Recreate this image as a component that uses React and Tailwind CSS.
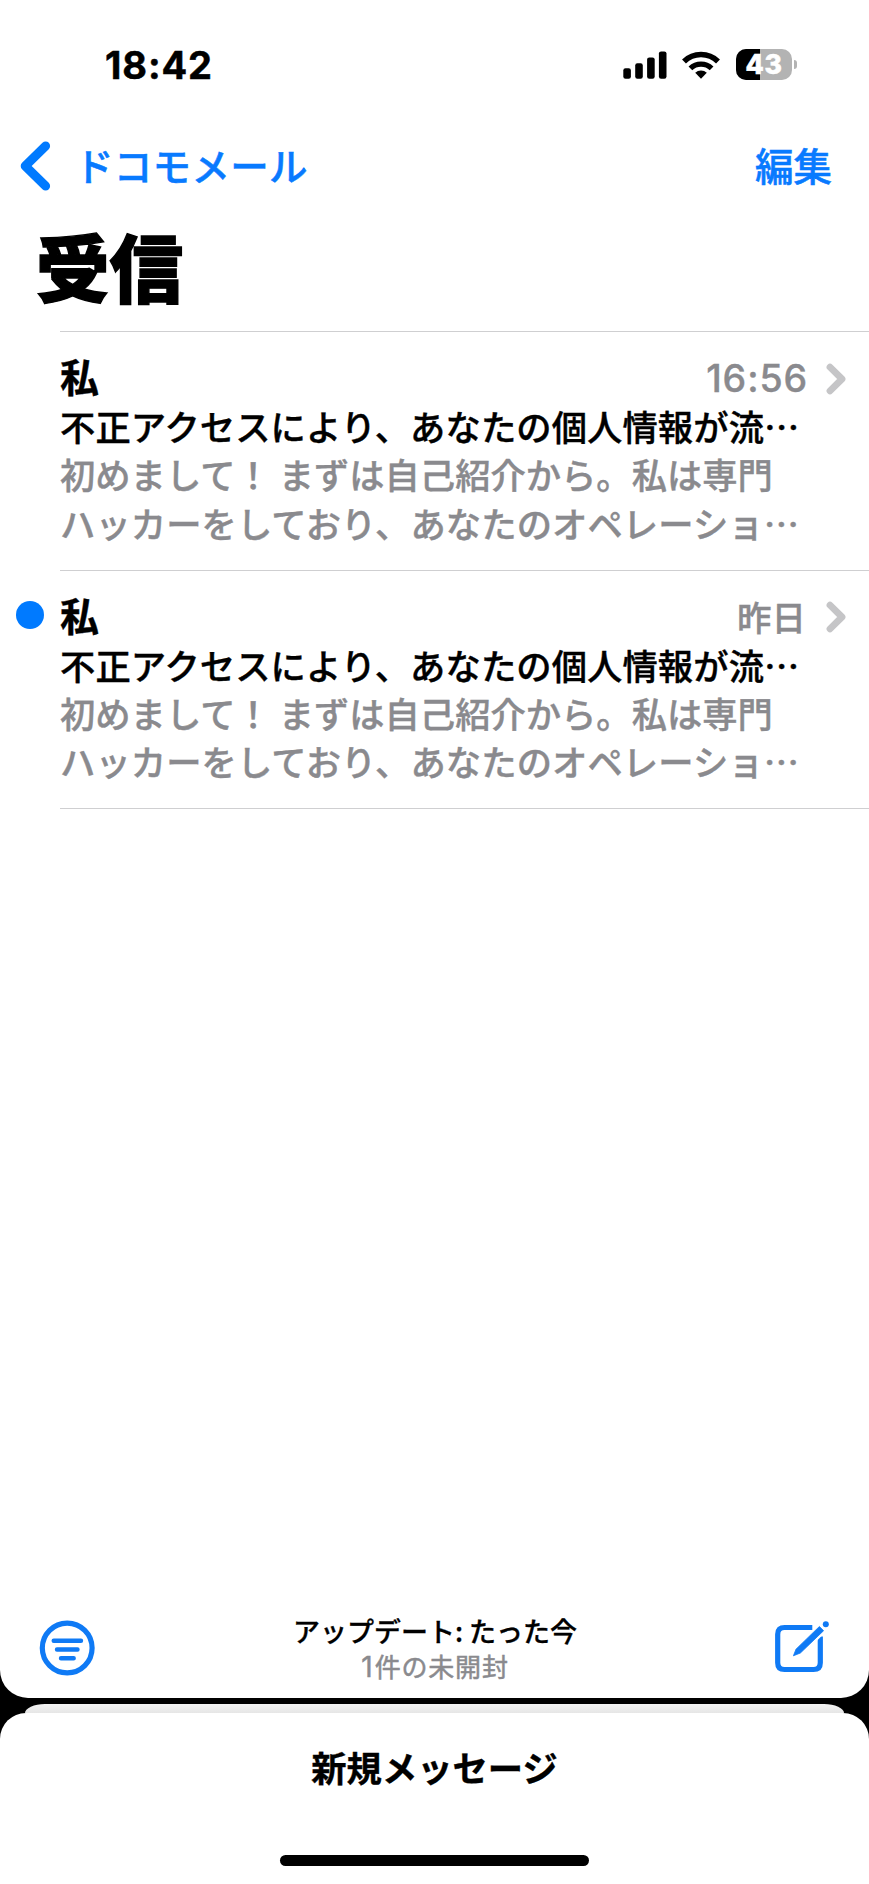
import clsx from "clsx"

const messages = [
  {
    id: 1,
    sender: "私",
    date: "16:56",
    unread: false,
    subject: "不正アクセスにより、あなたの個人情報が流",
    preview: ["初めまして！ まずは自己紹介から。私は専門", "ハッカーをしており、あなたのオペレーショ"],
  },
  {
    id: 2,
    sender: "私",
    date: "昨日",
    unread: true,
    subject: "不正アクセスにより、あなたの個人情報が流",
    preview: ["初めまして！ まずは自己紹介から。私は専門", "ハッカーをしており、あなたのオペレーショ"],
  },
]

function SignalIcon() {
  return (
    <svg width="44" height="28" viewBox="0 0 44 28" fill="#000">
      <rect x="0.3" y="17.3" width="7.6" height="10.4" rx="2.2" />
      <rect x="12.2" y="12.2" width="7.6" height="15.5" rx="2.2" />
      <rect x="24.1" y="6.4" width="7.6" height="21.3" rx="2.2" />
      <rect x="35.9" y="0.4" width="7.6" height="27.3" rx="2.2" />
    </svg>
  )
}

function WifiIcon() {
  return (
    <svg width="38" height="28" viewBox="0 0 38 28" fill="none" stroke="#000">
      <path d="M2 10.4 A24.5 24.5 0 0 1 36 10.4" strokeWidth="5.6" />
      <path d="M8.4 17.4 A15.4 15.4 0 0 1 29.6 17.4" strokeWidth="5.4" />
      <path d="M19 27.7 L13.2 21.8 A8.6 8.6 0 0 1 24.8 21.8 Z" fill="#000" stroke="none" />
    </svg>
  )
}

function Battery({ level }) {
  return (
    <div className="flex items-center gap-[2px]">
      <div className="relative flex h-[31px] w-[56px] items-center justify-center overflow-hidden rounded-[10px] bg-[#b3b3b3]">
        <div className="absolute inset-y-0 left-0 bg-black" style={{ width: `${level}%` }} />
        <span className="relative font-[Inter] text-[26.5px] leading-[31px] font-extrabold tracking-[0.8px] text-white [-webkit-text-stroke:0.6px]">{level}</span>
      </div>
      <div className="h-[9px] w-[3px] rounded-r-full bg-[#b3b3b3]" />
    </div>
  )
}

function StatusBar() {
  return (
    <div className="flex h-[130px] items-start justify-between pt-[46px] pr-[72px] pl-[105px]">
      <span className="font-[Inter] text-[38px] leading-[38px] font-bold tracking-[0.9px] [-webkit-text-stroke:0.5px]">18:42</span>
      <div className="flex items-center pt-[3px]">
        <SignalIcon />
        <span className="ml-[15px]"><WifiIcon /></span>
        <span className="ml-[16px]"><Battery level={43} /></span>
      </div>
    </div>
  )
}

function NavBar() {
  return (
    <div className="flex h-[72px] items-center justify-between pr-[37px] pl-[20px] text-[#087aff]">
      <div className="flex items-center">
        <svg width="32" height="50" viewBox="0 0 32 50" fill="none" stroke="#007aff" strokeWidth="9" strokeLinecap="round" strokeLinejoin="round">
          <path d="M25.6 5 L5.2 25 L25.6 45" />
        </svg>
        <span className="mb-[4px] ml-[23px] text-[38.5px] leading-[50px] font-medium tracking-[0.3px] [-webkit-text-stroke:0.5px]">ドコモメール</span>
      </div>
      <span className="mb-[4px] text-[38.5px] leading-[50px] font-medium [-webkit-text-stroke:0.5px]">編集</span>
    </div>
  )
}

function MessageRow({ message }) {
  return (
    <div className="flex h-[238.5px]">
      <div className="w-[60px] shrink-0 pt-[32px] pl-[16px]">
        {message.unread && <div className="-mt-px size-[28px] rounded-full bg-[#007aff]" />}
      </div>
      <div className="min-w-0 flex-1 border-t border-[#cfcfd1] pt-[18px] whitespace-nowrap">
        <div className="flex h-[50px] items-center justify-between pr-[23px]">
          <span className="text-[39px] leading-[50px] font-bold [-webkit-text-stroke:0.4px]">{message.sender}</span>
          <div className="flex items-center text-[#8a8a8e]">
            <span
              className={clsx(
                "font-medium [-webkit-text-stroke:0.4px]",
                message.unread
                  ? "mr-[20px] pt-[4px] text-[34.5px] leading-[46px]"
                  : "mr-[18px] pt-[8px] font-[Inter] text-[37.5px] leading-[42px] tracking-[0.9px]"
              )}
            >
              {message.date}
            </span>
            <svg className="mt-[7px]" width="20" height="32" viewBox="0 0 20 32" fill="none" stroke="#c5c5c7" strokeWidth="6.8" strokeLinecap="round" strokeLinejoin="round">
              <path d="M4 4.2 L16 16 L4 27.8" />
            </svg>
          </div>
        </div>
        <p className="mt-[1px] text-[35.3px] leading-[49px] font-medium tracking-[0.1px] [-webkit-text-stroke:0.4px]">{message.subject}…</p>
        <div className="text-[35.3px] leading-[48.5px] font-medium text-[#8a8a8e] [-webkit-text-stroke:0.4px]">
          <p>{message.preview[0]}</p>
          <p className="tracking-[0.1px]">{message.preview[1]}…</p>
        </div>
      </div>
    </div>
  )
}

function Toolbar() {
  return (
    <div className="flex h-[98px] items-start justify-between pr-[38px] pl-[39px]">
      <svg className="mt-[20px]" width="57" height="57" viewBox="0 0 57 57" fill="none" stroke="#0f7af5" strokeLinecap="round">
        <circle cx="28.2" cy="28" r="24.9" strokeWidth="5.2" />
        <path d="M14.7 20.8 H42 M18 29.5 H38.5 M22 38.2 H34.7" strokeWidth="4.4" />
      </svg>
      <div className="flex flex-col items-center pt-[13px]">
        <span className="text-[27px] leading-[35px] font-medium [-webkit-text-stroke:0.3px]">アップデート: たった今</span>
        <span className="text-[26px] leading-[35px] tracking-[0.8px] text-[#8a8a8e] [-webkit-text-stroke:0.5px]">
          <span className="font-[Inter] text-[28px] tracking-[2px]">1</span>件の未開封
        </span>
      </div>
      <svg className="mt-[18px]" width="57" height="56" viewBox="0 0 57 56" fill="none" stroke="#0f7af5">
        <path d="M38.3 9.5 H10.5 Q3.7 9.5 3.7 16.3 V44.7 Q3.7 51.5 10.5 51.5 H39.5 Q46.3 51.5 46.3 44.7 V18.4" strokeWidth="5.2" />
        {/* white gap between the frame and the pencil */}
        <path d="M50 9 L26 33" stroke="#fff" strokeWidth="9.5" />
        <path d="M45.4 8.5 L49.6 12.7 L26.4 35 L19.4 37.8 L22 31.2 Z" fill="#0f7af5" stroke="#0f7af5" strokeWidth="0.8" strokeLinejoin="round" />
        <circle cx="51.8" cy="6.2" r="3" fill="#0f7af5" stroke="none" />
      </svg>
    </div>
  )
}

export default function App() {
  return (
    <div lang="ja" className="flex h-[1884px] w-[869px] flex-col overflow-hidden bg-black font-['Noto_Sans_CJK_JP',sans-serif] text-black">
      <div className="flex h-[1698px] flex-col rounded-b-[28px] bg-white">
        <StatusBar />
        <NavBar />
        <h1 className="h-[129px] pt-[18px] pl-[36px] text-[73.5px] leading-[90px] font-black [-webkit-text-stroke:1.4px]">受信</h1>
        <div>
          {messages.map((message) => (
            <MessageRow key={message.id} message={message} />
          ))}
          <div className="ml-[60px] h-px bg-[#cfcfd1]" />
        </div>
        <div className="mt-auto">
          <Toolbar />
        </div>
      </div>

      {/* edge of the sheet stacked behind the draft */}
      <div className="mx-[25px] mt-[6px] h-[9px] rounded-t-[20px_9px] bg-linear-to-b from-[#f4f4f4] to-[#e6e6e6]" />
      <div className="flex flex-1 flex-col items-center rounded-t-[26px] bg-white">
        <span className="mt-[31px] text-[35.3px] leading-[46px] font-bold [-webkit-text-stroke:0.4px]">新規メッセージ</span>
        <div className="mt-auto mb-[18px] h-[11px] w-[309px] rounded-full bg-black" />
      </div>
    </div>
  )
}
